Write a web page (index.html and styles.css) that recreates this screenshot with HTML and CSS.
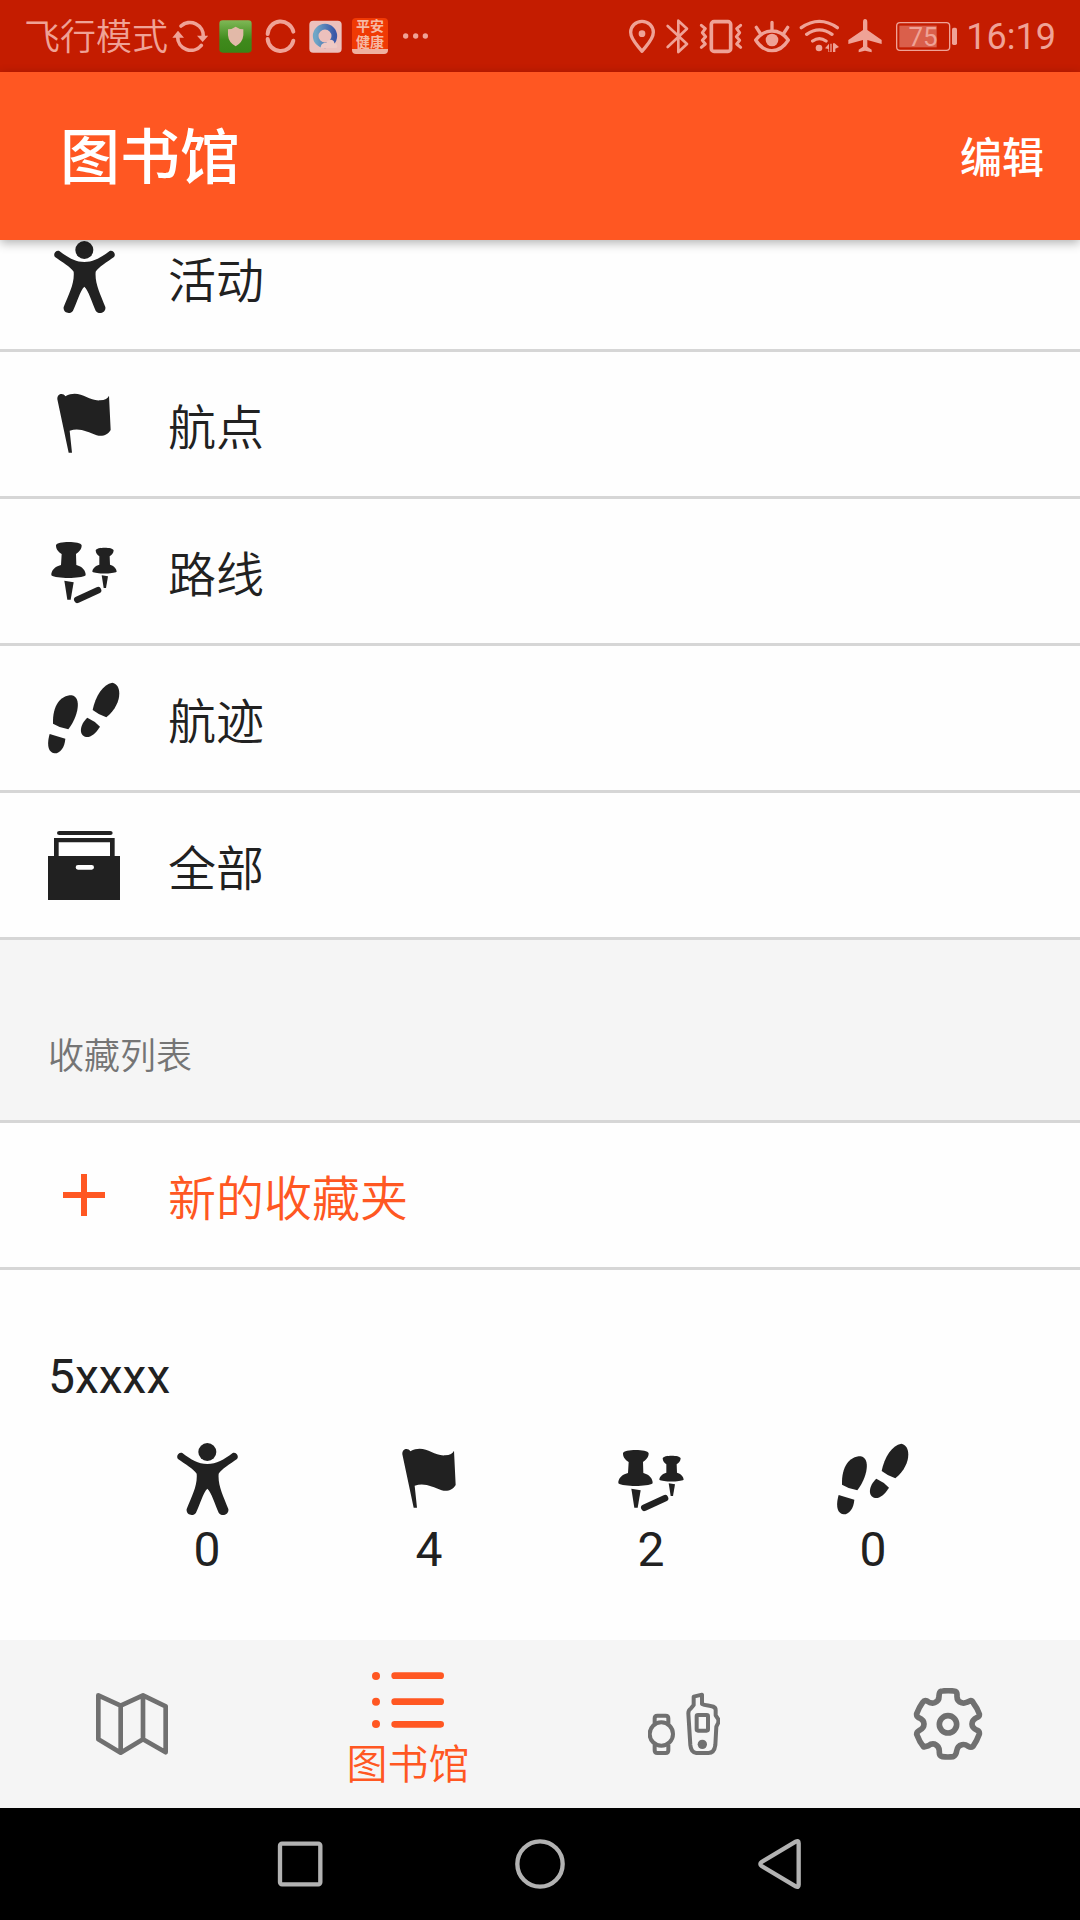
FILE: index.html
```html
<!DOCTYPE html>
<html lang="zh-CN">
<head>
<meta charset="utf-8">
<meta name="viewport" content="width=device-width, initial-scale=1">
<title>图书馆</title>
<link rel="stylesheet" href="styles.css">
</head>
<body>
<svg class="sprite" aria-hidden="true">
  <symbol id="activity" viewBox="144 33 216 216">
    <circle cx="253" cy="60" r="27"/>
    <path d="M178 63 C205 83 225 96 253 96 C281 96 302 83 329 63 C340 60 349 72 342 81 C322 95 295 112 287 125 C284 160 300 190 316 231 C319 249 295 255 287 242 C275 215 266 182 253 170 C240 182 232 215 219 242 C211 255 188 249 191 231 C207 190 224 160 221 125 C213 112 185 95 165 81 C158 72 167 60 178 63Z"/>
  </symbol>
  <symbol id="waypoint" viewBox="144 474 216 216">
    <path d="M172 508 C171 490 190 488 196 499 C240 476 262 514 300 511 C315 510 324 505 327 497 L332 600 C324 614 308 621 290 616 C262 606 240 592 209 602 L216 668 H206 Z"/>
  </symbol>
  <symbol id="route" viewBox="144 105 216 216">
    <path d="M168 136 C170 123 242 123 245 136 C245 150 236 156 228 162 L229 195 C246 199 258 212 257 226 C242 237 169 237 154 226 C153 212 165 199 183 195 L185 162 C176 156 168 150 168 136Z"/>
    <path d="M193 242 L221 247 L212 299 H202Z"/>
    <path d="M287 151 C290 141 338 141 341 151 C341 160 334 165 329 169 L330 194 C341 197 350 206 350 215 C339 222 288 222 277 215 C277 206 287 197 298 194 L298 169 C293 165 287 160 287 151Z"/>
    <path d="M305 226 L324 229 L318 264 H311Z"/>
    <path class="stroke" d="M232 299 L294 271" stroke-width="20" stroke-linecap="round"/>
  </symbol>
  <symbol id="track" viewBox="144 546 216 216">
    <path d="M159 671 C157 618 181 586 215 586 C246 591 235 650 205 688 Q180 684 159 671Z"/>
    <path d="M149 702 L196 716 C194 742 181 760 164 760 C142 757 141 729 149 702Z"/>
    <path d="M278 630 C286 588 309 553 337 548 C366 552 369 612 319 652 Q297 645 278 630Z"/>
    <path d="M262 653 Q283 662 300 680 C287 701 272 712 259 711 C234 706 240 673 262 653Z"/>
  </symbol>
  <symbol id="archive" viewBox="144 147 216 216">
    <path d="M178 153 H331 Q338 153 338 159 Q338 165 331 165 H178 Q171 165 171 159 Q171 153 178 153Z"/>
    <path fill-rule="evenodd" d="M162 174 H344 V228 H360 V360 H144 V228 H162Z M176 187 V228 H330 V187Z M234 255 Q227 255 227 262 Q227 269 234 269 H275 Q282 269 282 262 Q282 255 275 255Z"/>
  </symbol>
  <symbol id="plus" viewBox="144 117 216 216">
    <path d="M243 162 H261 V216 H315 V234 H261 V288 H243 V234 H189 V216 H243Z"/>
  </symbol>
</svg>

<header class="status">
  <div class="status-left">
    <span class="carrier">飞行模式</span>
    <div class="notices">
      <svg class="notice" viewBox="516 54 108 108" aria-hidden="true">
        <g class="line" stroke-width="11"><path d="M543 78 A40 40 0 0 1 610 110"/><path d="M604 136 A40 40 0 0 1 533 110"/></g>
        <path class="solid" d="M517 113 L534 92 L552 113Z M591 107 H625 L608 126Z"/>
      </svg>
      <svg class="notice" viewBox="651 54 108 108" aria-hidden="true">
        <defs><linearGradient id="leaf" x2="0" y2="1"><stop offset="0" stop-color="#7fb856"/><stop offset=".6" stop-color="#3f8a1c"/><stop offset="1" stop-color="#3a8417"/></linearGradient></defs>
        <rect x="658" y="61" width="97" height="97" rx="10" fill="url(#leaf)"/>
        <path d="M707 80 Q718 88 730 88 V106 Q728 128 707 139 Q686 128 684 106 V88 Q696 88 707 80Z" fill="#e2b9a8"/>
      </svg>
      <svg class="notice" viewBox="786 54 108 108" aria-hidden="true">
        <g class="line" stroke-width="12"><path d="M803 102 A39 39 0 0 1 880 95"/><path d="M803 117 A39 39 0 0 0 880 122"/></g>
      </svg>
      <svg class="notice" viewBox="921 54 108 108" aria-hidden="true">
        <defs><linearGradient id="sea" x2="1"><stop offset="0" stop-color="#6fa6c6"/><stop offset="1" stop-color="#3a58a8"/></linearGradient></defs>
        <rect x="928" y="62" width="97" height="96" rx="12" fill="#ecc0bc"/>
        <circle cx="975" cy="108" r="28" fill="none" stroke="url(#sea)" stroke-width="17"/>
        <path d="M962 144 C962 128 975 128 979 128 C985 114 1004 118 1003 130 C1014 132 1014 144 1008 144Z" fill="#efc9c4"/>
      </svg>
      <span class="health-app">平安<br>健康</span>
      <svg class="notice" viewBox="1191 54 108 108" aria-hidden="true">
        <g class="solid"><circle cx="1217" cy="108" r="8"/><circle cx="1247" cy="108" r="8"/><circle cx="1276" cy="108" r="8"/></g>
      </svg>
    </div>
  </div>
  <div class="status-right">
    <svg class="signal" viewBox="51 54 90 108" aria-hidden="true">
      <path class="line" stroke-width="10" d="M99 154 C88 138 65 120 65 97 A34 33 0 0 1 133 97 C133 120 110 138 99 154Z"/>
      <circle class="solid" cx="99" cy="101" r="10"/>
    </svg>
    <svg class="signal" viewBox="165 54 78 108" aria-hidden="true">
      <path class="line" stroke-width="8" d="M176 78 L234 132 L208 156 V62 L234 86 L176 141"/>
    </svg>
    <svg class="signal" viewBox="267 54 138 108" aria-hidden="true">
      <rect class="line" stroke-width="11" x="307" y="65" width="58" height="89" rx="8"/>
      <path class="line" stroke-width="9" d="M277 76 L289 86 L280 98 L290 110 L280 121 L289 132 L277 142 M395 76 L383 86 L392 98 L382 110 L392 121 L383 132 L395 142"/>
    </svg>
    <svg class="signal" viewBox="429 54 117 108" aria-hidden="true">
      <path class="line" stroke-width="10" d="M440 120 C455 100 470 93 489 93 C508 93 523 100 538 120 C523 144 508 152 489 152 C470 152 455 144 440 120Z M489 67 V91 M442 82 L453 99 M536 82 L525 99"/>
      <circle class="solid" cx="489" cy="120" r="19"/>
    </svg>
    <svg class="signal" viewBox="570 54 120 108" aria-hidden="true">
      <path class="line" stroke-width="10" d="M577 83 Q631 45 685 83 M593 103 Q631 76 669 103 M611 123 Q631 109 651 123"/>
      <path class="solid" d="M648 145 L660 131 V155 H664 V131 H668 V156 H658 V147Z M672 130 H677 L690 141 L679 146 V156 H672Z"/>
      <circle class="solid" cx="630" cy="144" r="10"/>
    </svg>
    <svg class="signal" viewBox="711 54 120 108" aria-hidden="true">
      <path class="solid" d="M765 57 Q772 57 772 67 V90 L815 120 V132 L772 120 V140 L785 149 V157 L765 152 L746 157 V149 L759 140 V120 L715 132 V120 L759 90 V67 Q759 57 765 57Z"/>
    </svg>
    <svg class="signal" viewBox="855 54 189 108" role="img" aria-label="电量 75">
      <rect class="line" stroke-width="4" x="860" y="68" width="159" height="83" rx="10"/>
      <rect class="solid" x="868" y="77" width="112" height="65" opacity=".5"/>
      <rect class="solid" x="1026" y="83" width="15" height="52" rx="5"/>
      <text class="solid charge" x="939" y="138" text-anchor="middle">75</text>
    </svg>
    <time class="clock">16:19</time>
  </div>
</header>

<header class="app-bar">
  <h1 class="app-title">图书馆</h1>
  <button class="edit" type="button">编辑</button>
</header>

<main class="scroller">
  <ul class="rows rows-scrolled">
    <li><a class="row" href="#activities"><svg class="icon"><use href="#activity"/></svg><span>活动</span></a></li>
    <li><a class="row" href="#waypoints"><svg class="icon"><use href="#waypoint"/></svg><span>航点</span></a></li>
    <li><a class="row" href="#routes"><svg class="icon"><use href="#route"/></svg><span>路线</span></a></li>
    <li><a class="row" href="#tracks"><svg class="icon"><use href="#track"/></svg><span>航迹</span></a></li>
    <li><a class="row" href="#all"><svg class="icon"><use href="#archive"/></svg><span>全部</span></a></li>
  </ul>
  <h2 class="section-title">收藏列表</h2>
  <button class="row row-new" type="button"><svg class="icon"><use href="#plus"/></svg><span>新的收藏夹</span></button>
  <section class="collection">
    <h3 class="collection-name">5xxxx</h3>
    <ul class="counts">
      <li class="count"><svg class="icon"><use href="#activity"/></svg><span>0</span></li>
      <li class="count"><svg class="icon"><use href="#waypoint"/></svg><span>4</span></li>
      <li class="count"><svg class="icon"><use href="#route"/></svg><span>2</span></li>
      <li class="count"><svg class="icon"><use href="#track"/></svg><span>0</span></li>
    </ul>
  </section>
</main>

<nav class="tabs">
  <a class="tab" href="#map" aria-label="地图">
    <svg class="icon" viewBox="108 174 216 216"><path class="stroke" stroke-width="14" stroke-linejoin="round" d="M115 196 L182 227 L249 196 L317 229 V367 L249 328 L182 368 L115 328Z M182 227 V368 M249 196 V328"/></svg>
  </a>
  <a class="tab tab-active" href="#library" aria-current="page">
    <svg class="icon" viewBox="936 102 216 216"><circle cx="948" cy="138" r="12"/><circle cx="948" cy="215" r="12"/><circle cx="948" cy="282" r="12"/><path class="stroke" stroke-width="20" stroke-linecap="round" d="M1004 137 H1142 M1004 215 H1142 M1004 283 H1142"/></svg>
    <span>图书馆</span>
  </a>
  <a class="tab" href="#devices" aria-label="设备">
    <svg class="icon" viewBox="144 174 216 216">
      <g class="stroke" stroke-width="12" stroke-linejoin="round"><circle cx="184" cy="312" r="35"/><path d="M164 281 V265 Q164 257 172 257 H197 Q205 257 205 265 V281 M164 344 V361 Q164 369 172 369 H197 Q205 369 205 361 V344"/>
      <path d="M281 200 L306 194 V222 C320 229 347 224 347 240 V256 L355 268 V278 L349 290 L346 345 Q343 369 325 369 H289 Q273 367 271 345 L265 250 Q265 240 273 235 L281 225Z"/><rect x="290" y="255" width="34" height="47" rx="4"/></g>
      <circle cx="307" cy="343" r="14"/>
    </svg>
  </a>
  <a class="tab" href="#settings" aria-label="设置">
    <svg class="icon" viewBox="936 174 216 216">
      <g class="stroke" stroke-width="17" stroke-linejoin="round"><circle cx="1044" cy="283" r="26"/>
      <path d="M1018 191 Q1019 183 1028 183 Q1044 181 1061 183 Q1071 184 1071 193 V200 Q1071 214 1085 218 Q1092 221 1100 217 L1112 212 Q1117 212 1120 219 Q1133 236 1138 252 Q1139 259 1132 262 Q1116 270 1116 282 Q1116 294 1132 301 Q1139 305 1138 312 Q1131 332 1119 349 Q1113 354 1105 349 Q1095 342 1086 344 Q1072 347 1070 363 Q1068 377 1060 380 Q1044 382 1027 380 Q1017 378 1018 364 Q1018 348 1003 342 Q994 340 985 347 L971 351 Q958 335 950 313 Q950 306 957 302 Q972 295 972 282 Q972 270 956 263 Q949 259 950 251 Q957 232 968 217 Q973 210 981 213 Q993 222 1004 218 Q1018 212 1017 198Z"/></g>
    </svg>
  </a>
</nav>

<footer class="system-nav">
  <button class="key" type="button" aria-label="最近任务"><svg class="key-icon" viewBox="639 621 162 162"><rect x="660" y="641" width="121" height="122" rx="6"/></svg></button>
  <button class="key" type="button" aria-label="主页"><svg class="key-icon" viewBox="0 0 162 162"><circle cx="81" cy="81" r="68"/></svg></button>
  <button class="key" type="button" aria-label="返回"><svg class="key-icon" viewBox="459 621 162 162"><path d="M587 635 Q596 630 596 640 V764 Q596 774 587 769 L485 708 Q477 702 485 696Z"/></svg></button>
</footer>
</body>
</html>
```

FILE: styles.css
```css
* {
  box-sizing: border-box;
}

body {
  margin: 0;
  min-height: 100vh;
  display: flex;
  flex-direction: column;
  background: #fefefe;
  color: #212121;
  font-family: Roboto, "Noto Sans CJK SC", sans-serif;
}

h1, h2, h3, ul {
  margin: 0;
  padding: 0;
  font-weight: 400;
  list-style: none;
}

button {
  border: 0;
  padding: 0;
  background: none;
  color: inherit;
  font: inherit;
}

a {
  color: inherit;
  text-decoration: none;
}

.sprite {
  display: none;
}

.icon {
  flex: none;
  display: block;
  width: 72px;
  height: 72px;
  fill: currentColor;
}

.stroke {
  fill: none;
  stroke: currentColor;
}

/* Status bar */

.status {
  height: 72px;
  padding: 0 24px;
  display: flex;
  align-items: center;
  justify-content: space-between;
  background: #c41c00;
  color: #efa296;
  font-size: 36px;
}

.status-left {
  display: flex;
  align-items: center;
  gap: 4px;
}

.carrier {
  padding-top: 4px;
  font-weight: 350;
  line-height: 48px;
}

.notices {
  display: flex;
  gap: 9px;
}

.notice {
  width: 36px;
  height: 36px;
}

.line {
  fill: none;
  stroke: currentColor;
  stroke-linecap: round;
  stroke-linejoin: round;
}

.solid {
  fill: currentColor;
}

.health-app {
  width: 36px;
  height: 36px;
  border-bottom: 5px solid #efb0a0;
  border-radius: 4px;
  background: #f03a04;
  color: #f6b9a4;
  font-size: 14px;
  font-weight: 700;
  line-height: 16px;
  text-align: center;
}

.status-right {
  display: flex;
  align-items: center;
  gap: 8px;
}

.signal {
  height: 36px;
}

.charge {
  font-size: 78px;
}

.clock {
  padding-top: 2px;
  line-height: 48px;
}

/* App bar */

.app-bar {
  position: relative;
  z-index: 1;
  height: 168px;
  padding: 0 36px 4px 60px;
  display: flex;
  align-items: center;
  justify-content: space-between;
  background: #ff5722;
  color: #fff;
  box-shadow: 0 3px 10px rgba(0, 0, 0, 0.3);
}

.app-title {
  padding-top: 10px;
  font-size: 60px;
  font-weight: 500;
  line-height: 72px;
}

.edit {
  font-size: 42px;
  font-weight: 500;
}

/* Library list */

.scroller {
  flex: 1;
  overflow: hidden;
}

.rows-scrolled {
  margin-top: -35px;
}

.row {
  width: 100%;
  height: 147px;
  padding: 0 48px;
  display: flex;
  align-items: center;
  gap: 48px;
  border-bottom: 3px solid #d6d6d6;
  font-size: 48px;
  font-weight: 350;
  text-align: left;
}

.row-new {
  color: #ff5722;
}

.section-title {
  height: 183px;
  padding: 87px 48px 0;
  border-bottom: 3px solid #d6d6d6;
  background: #f5f5f5;
  color: #757575;
  font-size: 36px;
  font-weight: 350;
  line-height: 60px;
}

.collection {
  padding: 74px 0 56px;
  font-size: 48px;
  line-height: 66px;
}

.collection-name {
  padding: 0 48px;
  font-size: 48px;
}

.counts {
  margin-top: 33px;
  padding: 0 96px;
  display: flex;
}

.count {
  flex: 1;
  display: flex;
  flex-direction: column;
  align-items: center;
  gap: 2px;
}

/* Bottom tabs: the active tab is a little wider */

.tabs {
  height: 168px;
  display: grid;
  grid-template-columns: 11fr 12fr 11fr 11fr;
  background: #f5f5f5;
  color: #707070;
}

.tab {
  display: flex;
  flex-direction: column;
  align-items: center;
  justify-content: center;
}

.tab-active {
  padding-bottom: 14px;
  justify-content: flex-end;
  color: #ff5722;
  font-size: 41px;
  font-weight: 350;
  line-height: 58px;
}

/* System navigation */

.system-nav {
  height: 112px;
  display: flex;
  justify-content: center;
  background: #000;
}

.key {
  width: 240px;
  display: flex;
  align-items: center;
  justify-content: center;
}

.key-icon {
  width: 54px;
  height: 54px;
  fill: none;
  stroke: #b2b2b2;
  stroke-width: 13;
}
```
